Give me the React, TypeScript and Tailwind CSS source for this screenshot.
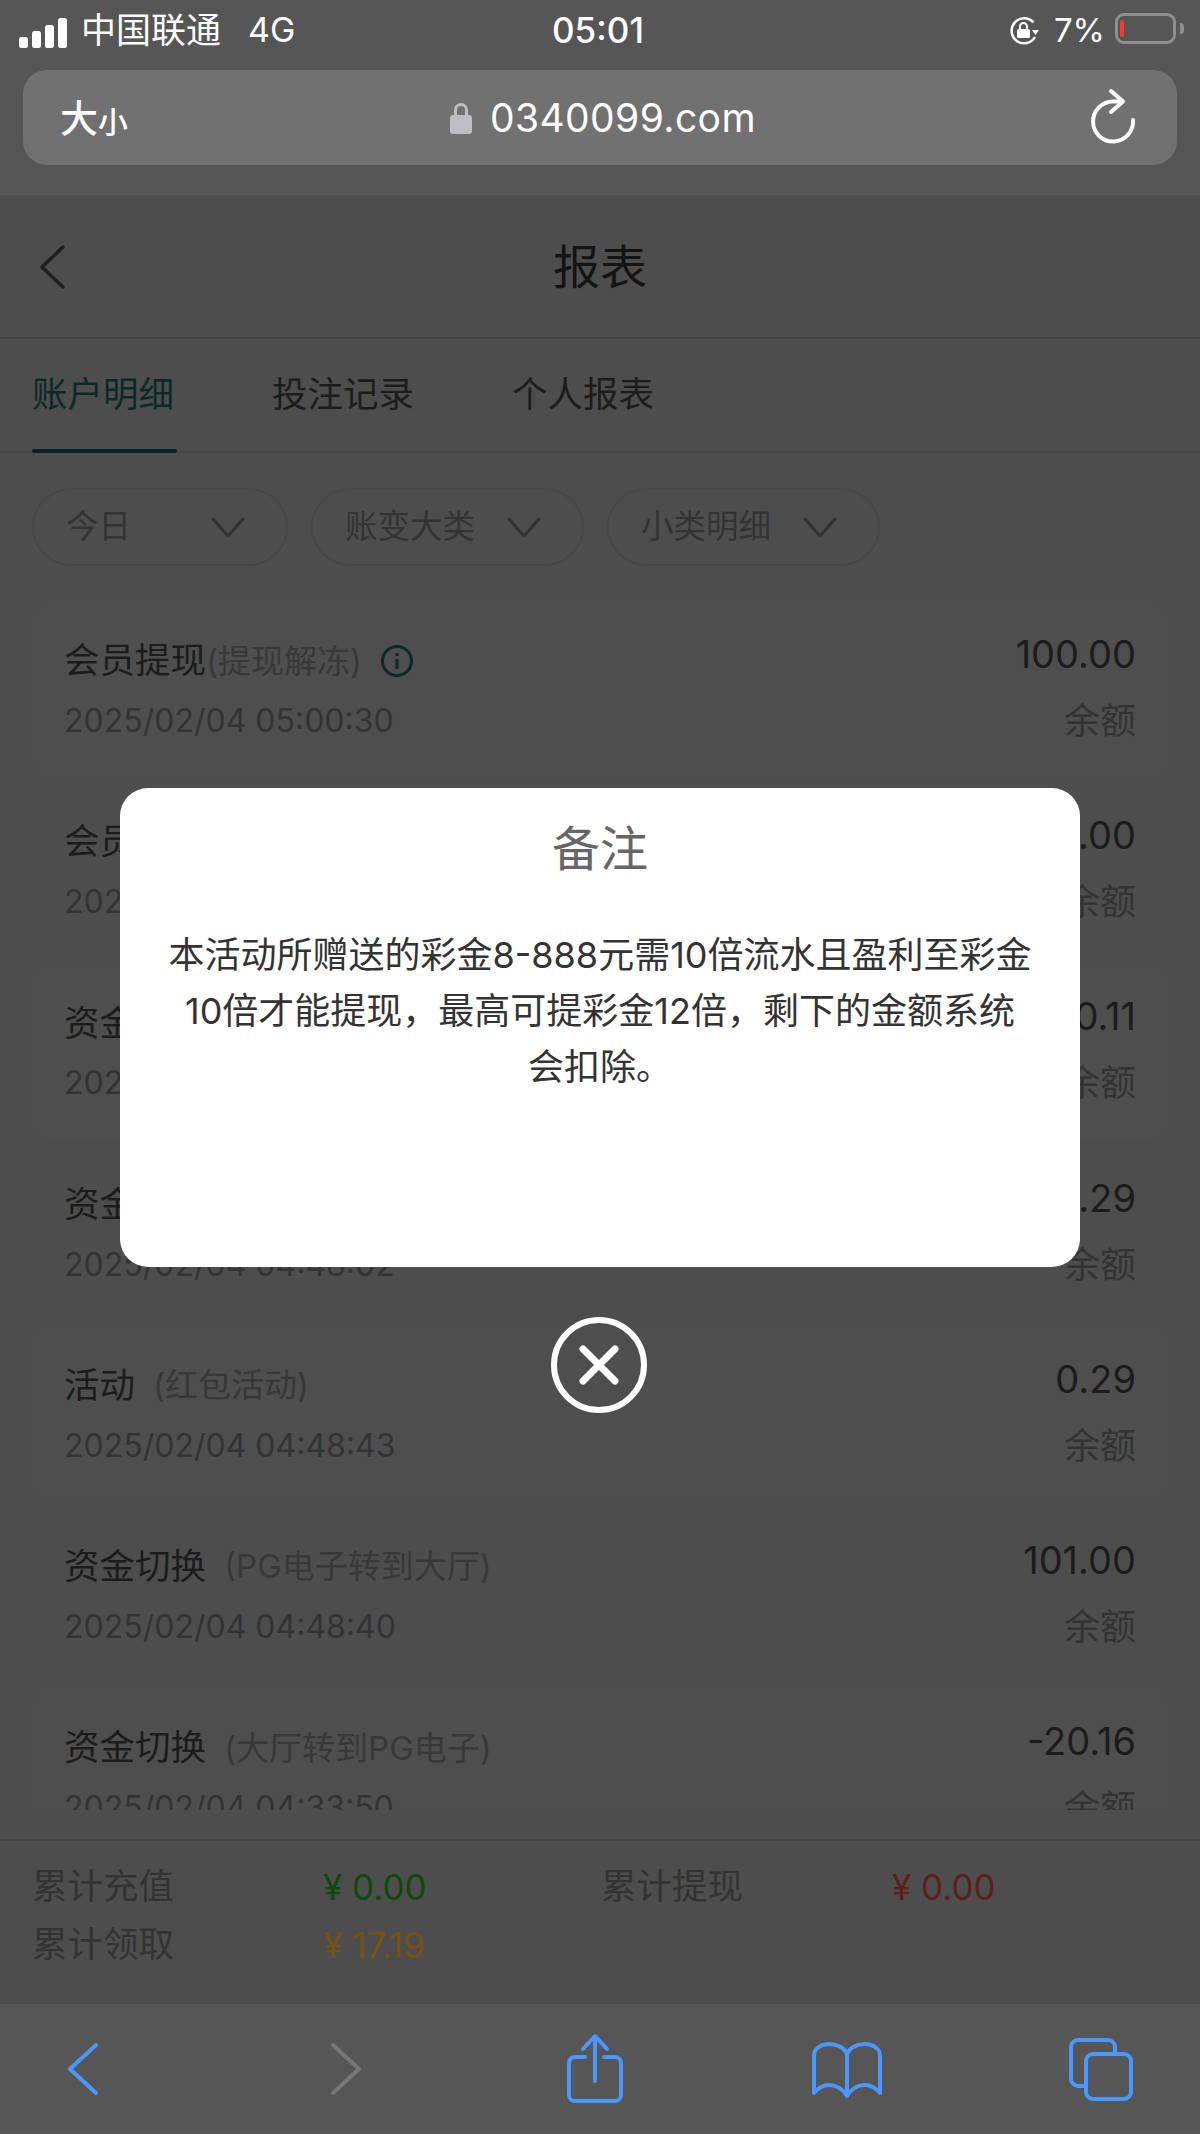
const font = { fontFamily: '"Inter","Noto Sans CJK SC","Liberation Sans",sans-serif' };

const rows = [
  { t: "会员提现", s: "(提现解冻)", d: "2025/02/04 05:00:30", a: "100.00", info: true, tight: true, card: true },
  { t: "会员提现", s: "(提现解冻)", d: "2025/02/04 05:00:12", a: "100.00", card: false },
  { t: "资金切换", s: "(大厅转到PG电子)", d: "2025/02/04 04:49:20", a: "20.11", card: true },
  { t: "资金切换", s: "(PG电子转到大厅)", d: "2025/02/04 04:48:02", a: "0.29", card: false },
  { t: "活动", s: "(红包活动)", d: "2025/02/04 04:48:43", a: "0.29", card: true },
  { t: "资金切换", s: "(PG电子转到大厅)", d: "2025/02/04 04:48:40", a: "101.00", card: false },
  { t: "资金切换", s: "(大厅转到PG电子)", d: "2025/02/04 04:33:50", a: "-20.16", card: true },
];

function Chevron() {
  return (
    <svg width="34" height="22" viewBox="0 0 34 22" fill="none" stroke="#333" strokeWidth="3" strokeLinecap="round" strokeLinejoin="round">
      <path d="M2 3 L17 20 L32 3" />
    </svg>
  );
}

function Chip({ label, w, gap }: { label: string; w: string; gap: string }) {
  return (
    <div className={`flex h-[78px] items-center rounded-[39px] border-2 border-[#474747] pl-[32px] ${w}`}>
      <span className={`text-[32.5px] leading-none text-[#333333] ${gap}`}>{label}</span>
      <Chevron />
    </div>
  );
}

function Row({ r }: { r: (typeof rows)[number] }) {
  return (
    <div className={`relative h-[178px] shrink-0 rounded-[14px] px-[32px] pt-[32px] ${r.card ? "bg-[#4e4e4e]" : ""}`}>
      <div className="flex items-start justify-between">
        <div className="mt-[7px] flex h-[44px] items-center">
          <span className="text-[35.5px] leading-none text-[#1c1c1c]">{r.t}</span>
          <span className={`text-[33px] leading-none text-[#383838] ${r.tight ? "ml-0" : "ml-[18px]"}`}>{r.s}</span>
          {r.info && (
            <svg className="ml-[18px]" width="34" height="34" viewBox="0 0 34 34" fill="none" stroke="#0c2a25" strokeWidth="3">
              <circle cx="17" cy="17" r="14.5" />
              <path d="M17 15 V25 M17 9 V12" />
            </svg>
          )}
        </div>
        <span className="text-[38px] leading-[44px] text-[#1c1c1c]">{r.a}</span>
      </div>
      <div className="mt-[18px] flex items-center justify-between">
        <span className="text-[32px] leading-[40px] text-[#333333]">{r.d}</span>
        <span className="text-[36px] leading-[40px] text-[#333333]">余额</span>
      </div>
    </div>
  );
}

function Stat({ label, value, color, w }: { label: string; value: string; color: string; w: string }) {
  return (
    <div className={`flex items-center ${w}`}>
      <span className="w-[291px] text-[35.5px] leading-[58px] text-[#333333]">{label}</span>
      <span className={`text-[35px] leading-[58px] ${color}`}>{value}</span>
    </div>
  );
}

export default function App() {
  return (
    <div style={font} className="relative flex h-[2134px] w-[1200px] flex-col overflow-hidden bg-[#4d4d4d]">
      {/* Safari top chrome */}
      <div className="flex h-[195px] shrink-0 flex-col bg-[#565656] px-[23px]">
        <div className="relative -mt-[5px] flex h-[70px] items-center text-white">
          <svg className="-ml-[4px] mt-[5px]" width="50" height="30" viewBox="0 0 50 30" fill="white">
            <rect x="0" y="19" width="9" height="11" rx="2.5" />
            <rect x="13" y="13" width="9" height="17" rx="2.5" />
            <rect x="26" y="7" width="9" height="23" rx="2.5" />
            <rect x="39" y="0" width="9" height="30" rx="2.5" />
          </svg>
          <span className="ml-[12px] text-[35px] leading-none">中国联通</span>
          <span className="ml-[27px] text-[34px] leading-none">4G</span>
          <span className="absolute left-[529px] text-[35px] font-medium leading-none">05:01</span>
          <div className="ml-auto -mr-[7px] flex items-center">
            <svg className="mt-[2px]" width="32" height="32" viewBox="0 0 32 32" fill="none" stroke="white" strokeWidth="2.5">
              <path d="M25.5 7.5 A12.5 12.5 0 1 0 27 22" />
              <path d="M24 15 L31 15 L27.5 20 Z" fill="white" stroke="none" />
              <rect x="9" y="14" width="13" height="9" rx="1.5" fill="white" stroke="none" />
              <path d="M12 15 V11.5 A3.5 3.5 0 0 1 19 11.5 V15" strokeWidth="2" />
            </svg>
            <span className="ml-[14px] text-[33px] leading-none">7%</span>
            <div className="relative ml-[10px] -mt-[3px] h-[31px] w-[61px] rounded-[9px] border-[3px] border-[#8f8f8f]">
              <div className="absolute left-[2px] top-[4px] h-[17px] w-[4px] rounded-sm bg-[#ff3b30]" />
            </div>
            <div className="ml-[4px] -mt-[3px] h-[11px] w-[4px] rounded-r-full bg-[#8f8f8f]" />
          </div>
        </div>
        <div className="mt-[5px] flex h-[95px] items-center rounded-[24px] bg-[#717171] pl-[37px] pr-[38px] text-white">
          <span className="text-[38px] font-medium leading-none">大</span>
          <span className="mt-[8px] text-[30px] font-medium leading-none">小</span>
          <div className="ml-[322px] flex items-center">
            <svg width="22" height="32" viewBox="0 0 22 32" fill="#bdbdc2">
              <rect x="0" y="13" width="22" height="19" rx="3" />
              <path d="M4 14 V8 A7 7 0 0 1 18 8 V14 H15 V8 A4 4 0 0 0 7 8 V14 Z" />
            </svg>
            <span className="ml-[18px] text-[39px] leading-none tracking-[0.4px]">0340099.com</span>
          </div>
          <svg className="ml-auto overflow-visible" width="48" height="56" viewBox="0 0 48 56" fill="none" stroke="white" strokeWidth="4" strokeLinecap="round" strokeLinejoin="round">
            <path d="M31 11.5 H22 A20 20 0 1 0 42 30" />
            <path d="M20 1 L32 11.5 L20 22" />
          </svg>
        </div>
      </div>

      {/* Page header */}
      <div className="relative flex h-[144px] shrink-0 items-center justify-center border-b-2 border-[#444444]">
        <svg className="absolute left-[38px] top-[50px]" width="28" height="44" viewBox="0 0 28 44" fill="none" stroke="#1f1f1f" strokeWidth="3.5" strokeLinecap="round" strokeLinejoin="round">
          <path d="M25 2 L4 22 L25 42" />
        </svg>
        <span className="text-[47px] leading-none text-[#141414]">报表</span>
      </div>

      {/* Tabs */}
      <div className="flex h-[114px] shrink-0 gap-[98px] border-b-2 border-[#444444] px-[32px]">
        <div className="relative flex h-full items-center">
          <span className="text-[35.5px] leading-none text-[#0c2a25]">账户明细</span>
          <div className="absolute bottom-[-2px] left-0 h-[4px] w-[145px] rounded-sm bg-[#06231f]" />
        </div>
        <span className="flex items-center text-[35.5px] leading-none text-[#1c1c1c]">投注记录</span>
        <span className="flex items-center text-[35.5px] leading-none text-[#1c1c1c]">个人报表</span>
      </div>

      {/* Filters */}
      <div className="flex shrink-0 gap-[23px] px-[32px] pt-[35px]">
        <Chip label="今日" w="w-[256px]" gap="mr-[80px]" />
        <Chip label="账变大类" w="w-[273px]" gap="mr-[32px]" />
        <Chip label="小类明细" w="w-[273px]" gap="mr-[32px]" />
      </div>

      {/* List */}
      <div className="mt-[34px] flex h-[1210px] shrink-0 flex-col gap-[3.2px] overflow-hidden px-[32px]">
        {rows.map((r, i) => (
          <Row key={i} r={r} />
        ))}
      </div>

      {/* Summary */}
      <div className="mt-[29px] flex h-[165px] shrink-0 flex-col border-t-2 border-[#444444] px-[32px] pt-[17px]">
        <div className="flex">
          <Stat label="累计充值" value="¥ 0.00" color="text-[#0c4a0c]" w="w-[569px]" />
          <Stat label="累计提现" value="¥ 0.00" color="text-[#5c1f1a]" w="w-[500px]" />
        </div>
        <Stat label="累计领取" value="¥ 17.19" color="text-[#755210]" w="w-[569px]" />
      </div>

      {/* Safari bottom bar */}
      <div className="relative flex flex-1 items-center bg-[#565656] pl-[66px]">
        <svg width="34" height="54" viewBox="0 0 34 54" fill="none" stroke="#4a97ff" strokeWidth="4" strokeLinecap="round" strokeLinejoin="round">
          <path d="M30 3 L4 27 L30 51" />
        </svg>
        <svg className="ml-[229px]" width="34" height="54" viewBox="0 0 34 54" fill="none" stroke="#777777" strokeWidth="4" strokeLinecap="round" strokeLinejoin="round">
          <path d="M4 3 L30 27 L4 51" />
        </svg>
        <svg className="ml-[203px] -mt-[1px]" width="58" height="72" viewBox="0 0 58 72" fill="none" stroke="#4a97ff" strokeWidth="4" strokeLinecap="round" strokeLinejoin="round">
          <path d="M19 24 H9 A6 6 0 0 0 3 30 V62 A6 6 0 0 0 9 68 H49 A6 6 0 0 0 55 62 V30 A6 6 0 0 0 49 24 H38" />
          <path d="M29 48 V4 M17 16 L29 3 L41 16" />
        </svg>
        <svg className="ml-[187px] mt-[2px]" width="72" height="58" viewBox="0 0 72 58" fill="none" stroke="#4a97ff" strokeWidth="4" strokeLinecap="round" strokeLinejoin="round">
          <path d="M36 13 C33 6 25 3 18 3 C10 3 3 8 3 14 V52 C8 46 13 44 18 44 C25 44 32 48 36 55 C40 48 47 44 54 44 C59 44 64 46 69 52 V14 C69 8 62 3 54 3 C47 3 39 6 36 13 V55" />
        </svg>
        <svg className="ml-[185px]" width="66" height="66" viewBox="0 0 66 66" fill="none" stroke="#4a97ff" strokeWidth="4" strokeLinejoin="round">
          <path d="M18 50 H10 A7 7 0 0 1 3 43 V11 A7 7 0 0 1 10 4 H40 A7 7 0 0 1 47 11 V18" />
          <rect x="18" y="18" width="45" height="45" rx="7" />
        </svg>
      </div>

      {/* Dialog */}
      <div className="absolute left-[120px] top-[788px] h-[479px] w-[960px] rounded-[28px] bg-white px-[30px] pt-[32px] text-center">
        <div className="text-[48px] leading-[58px] text-[#666666]">备注</div>
        <div className="mt-[49px] text-[36px] leading-[56px] text-[#333333]">
          本活动所赠送的彩金8-888元需10倍流水且盈利至彩金
          <br />
          10倍才能提现，最高可提彩金12倍，剩下的金额系统
          <br />
          会扣除。
        </div>
      </div>
      <div className="absolute left-[551px] top-[1317px] flex h-[96px] w-[96px] items-center justify-center rounded-full border-[6px] border-white">
        <svg width="44" height="44" viewBox="0 0 44 44" fill="none" stroke="white" strokeWidth="7" strokeLinecap="round">
          <path d="M6 6 L38 38 M38 6 L6 38" />
        </svg>
      </div>
    </div>
  );
}
